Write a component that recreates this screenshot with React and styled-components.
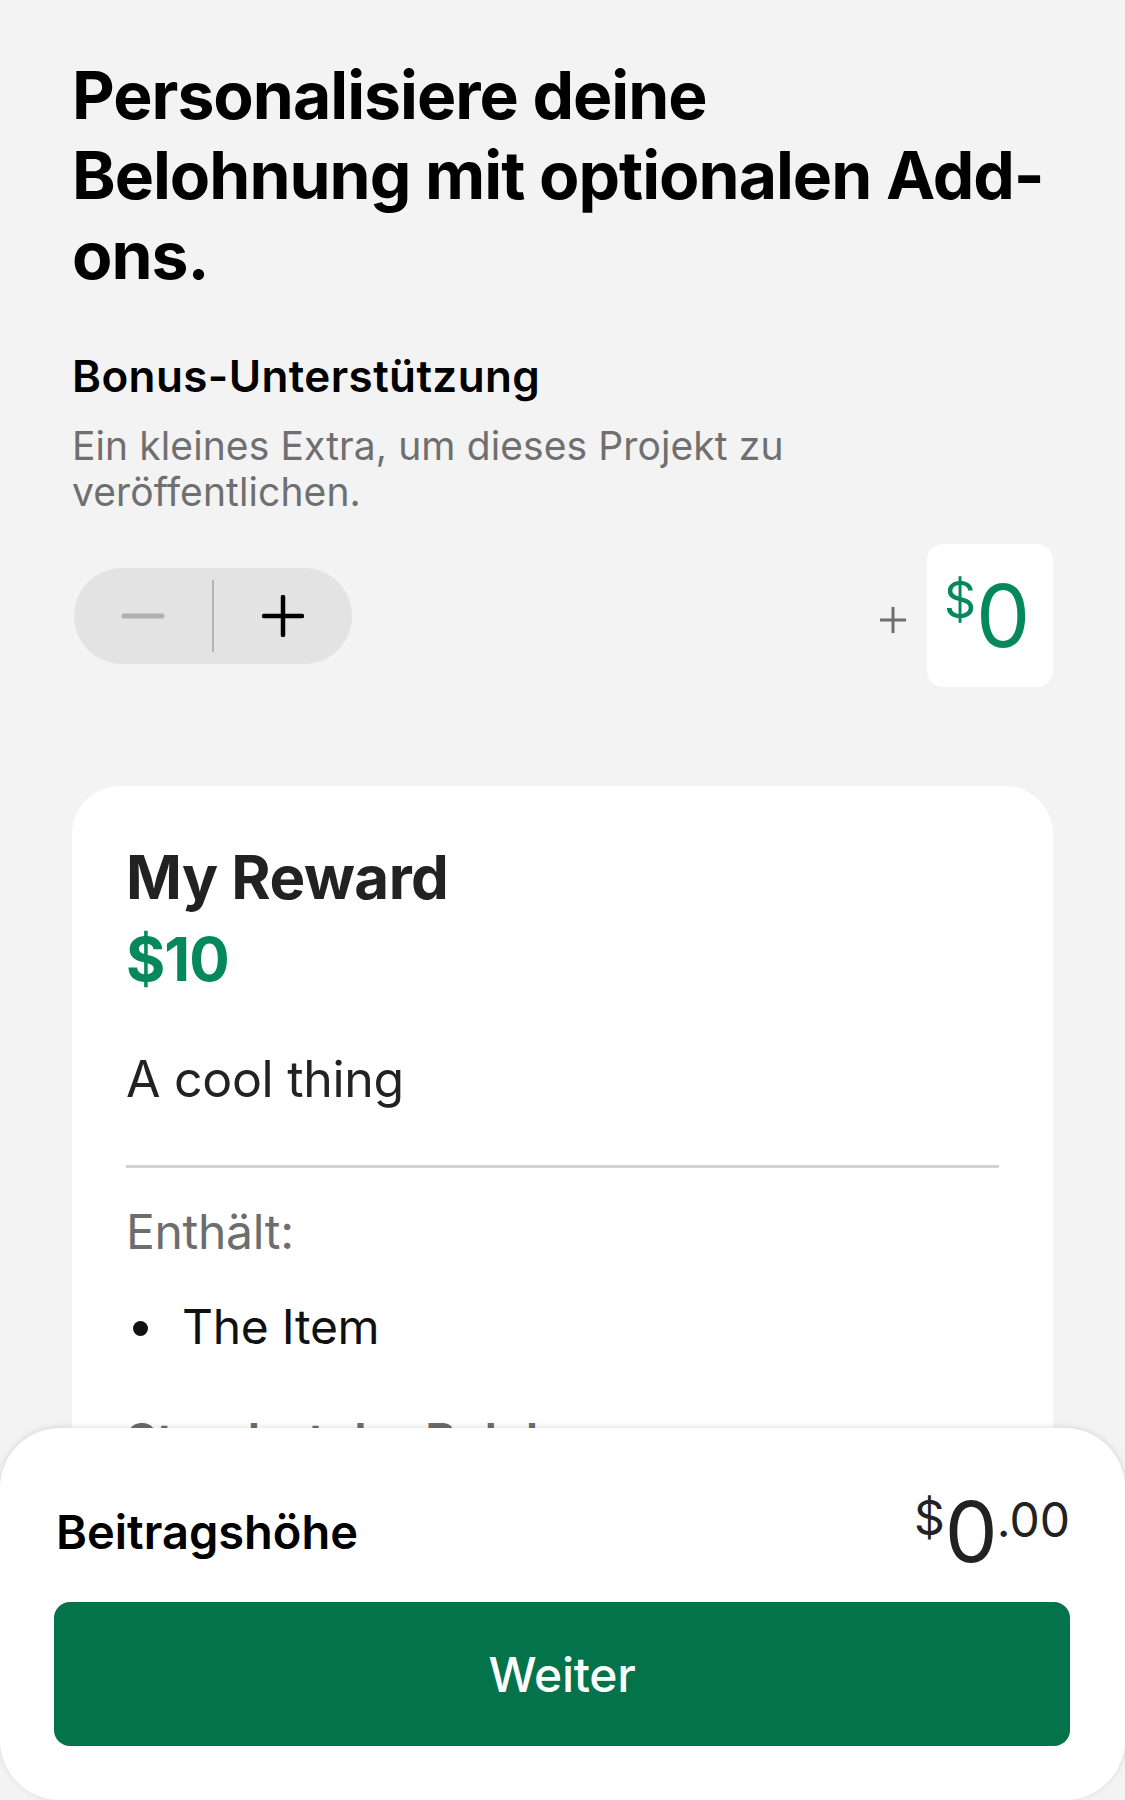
import React from "react";
import styled, { createGlobalStyle } from "styled-components";

const GlobalStyle = createGlobalStyle`
  html, body {
    margin: 0;
    padding: 0;
    background: #f3f3f3;
  }
  body {
    font-family: Inter, "Noto Sans", "Liberation Sans", sans-serif;
    -webkit-font-smoothing: antialiased;
  }
  * { box-sizing: border-box; }
`;

const Screen = styled.div`
  position: relative;
  width: 1125px;
  height: 1800px;
  overflow: hidden;
  background: #f3f3f3;
`;

const Content = styled.main`
  display: flex;
  flex-direction: column;
  padding: 55px 72px 0 72px;
`;

const Title = styled.h1`
  margin: 0 -30px 0 0;
  font-size: 66px;
  line-height: 80px;
  font-weight: 700;
  letter-spacing: -1px;
  color: #000;
  white-space: nowrap;
`;

const SectionTitle = styled.h2`
  margin: 56px 0 0;
  font-size: 44px;
  line-height: 50px;
  font-weight: 600;
  letter-spacing: 0.4px;
  color: #000;
`;

const Description = styled.p`
  margin: 22px 0 0;
  max-width: 760px;
  font-size: 39px;
  line-height: 46px;
  font-weight: 400;
  letter-spacing: 0.1px;
  color: #6f6f6f;
`;

const StepperRow = styled.div`
  display: flex;
  align-items: center;
  justify-content: space-between;
  margin-top: 29px;
  height: 143px;
`;

const Stepper = styled.div`
  display: flex;
  align-items: center;
  width: 278px;
  height: 96px;
  margin-left: 2px;
  border-radius: 48px;
  background: #e3e3e3;
`;

const StepButton = styled.button`
  display: flex;
  align-items: center;
  justify-content: center;
  width: 138px;
  height: 96px;
  padding: 0;
  border: none;
  background: transparent;
  cursor: pointer;
`;

const StepDivider = styled.span`
  width: 2px;
  height: 72px;
  background: #b5b5b5;
`;

const BonusGroup = styled.div`
  display: flex;
  align-items: center;
`;

const PlusSign = styled.span`
  display: flex;
  margin-right: 20px;
  margin-top: 8px;
`;

const BonusBox = styled.div`
  display: flex;
  align-items: center;
  justify-content: flex-start;
  width: 126px;
  height: 143px;
  padding: 0 0 0 17px;
  border-radius: 16px;
  background: #fff;
`;

const Money = styled.span`
  display: inline-flex;
  align-items: flex-start;
  color: ${(p) => p.$color};
`;

const MoneySmall = styled.span`
  font-size: ${(p) => p.$size}px;
  line-height: 1;
  margin-top: ${(p) => p.$offset}px;
  font-weight: 400;
`;

const MoneyBig = styled.span`
  font-size: ${(p) => p.$size}px;
  line-height: 1;
  font-weight: 400;
  letter-spacing: -1px;
`;

const Card = styled.section`
  display: flex;
  flex-direction: column;
  margin-top: 99px;
  padding: 55px 54px 80px;
  border-radius: 48px;
  background: #fff;
`;

const CardTitle = styled.h3`
  margin: 0;
  font-size: 60px;
  line-height: 72px;
  font-weight: 700;
  letter-spacing: -0.5px;
  color: #222;
`;

const CardPrice = styled.div`
  margin-top: 10px;
  font-size: 60px;
  line-height: 72px;
  font-weight: 700;
  letter-spacing: -1px;
  color: #05885b;
`;

const CardText = styled.p`
  margin: 54px 0 0;
  font-size: 50px;
  line-height: 60px;
  font-weight: 400;
  letter-spacing: -0.3px;
  color: #222;
`;

const Rule = styled.hr`
  margin: 56px 0 0;
  border: none;
  height: 3px;
  background: #d2d2d2;
`;

const Label = styled.div`
  margin-top: ${(p) => p.$top}px;
  font-size: 48px;
  line-height: 58px;
  font-weight: ${(p) => (p.$bold ? 600 : 400)};
  letter-spacing: -0.3px;
  color: #6d6d6d;
`;

const ItemList = styled.ul`
  margin: 37px 0 0;
  padding: 0;
  list-style: none;
`;

const Item = styled.li`
  display: flex;
  align-items: center;
  gap: 34px;
  padding-left: 7px;
  font-size: 48px;
  line-height: 58px;
  letter-spacing: -0.3px;
  color: #111;

  &::before {
    content: "";
    width: 15px;
    height: 15px;
    border-radius: 50%;
    background: #111;
    margin-top: 2px;
  }
`;

const Sheet = styled.footer`
  position: absolute;
  left: 0;
  right: 0;
  top: 1428px;
  bottom: 0;
  display: flex;
  flex-direction: column;
  padding: 62px 55px 54px 54px;
  border-radius: 60px;
  background: #fff;
  box-shadow: 0 -1px 6px rgba(0, 0, 0, 0.12);
`;

const TotalRow = styled.div`
  display: flex;
  align-items: center;
  justify-content: space-between;
  height: 84px;
`;

const TotalLabel = styled.span`
  font-size: 47px;
  line-height: 56px;
  font-weight: 600;
  letter-spacing: 0;
  color: #000;
  padding-left: 2px;
`;

const ContinueButton = styled.button`
  margin-top: 28px;
  height: 144px;
  width: 100%;
  border: none;
  border-radius: 16px;
  background: #02734a;
  color: #fff;
  font-family: inherit;
  font-size: 48px;
  font-weight: 500;
  letter-spacing: -0.3px;
  cursor: pointer;
`;

const MinusIcon = () => (
  <svg width="44" height="8" viewBox="0 0 44 8">
    <line x1="3" y1="4" x2="41" y2="4" stroke="#b0b0b0" strokeWidth="5" strokeLinecap="round" />
  </svg>
);

const PlusIcon = () => (
  <svg width="42" height="42" viewBox="0 0 42 42">
    <line x1="2" y1="21" x2="40" y2="21" stroke="#000" strokeWidth="4.5" strokeLinecap="round" />
    <line x1="21" y1="2" x2="21" y2="40" stroke="#000" strokeWidth="4.5" strokeLinecap="round" />
  </svg>
);

const SmallPlusIcon = () => (
  <svg width="28" height="28" viewBox="0 0 28 28">
    <line x1="1" y1="14" x2="27" y2="14" stroke="#6e6e6e" strokeWidth="3" />
    <line x1="14" y1="1" x2="14" y2="27" stroke="#6e6e6e" strokeWidth="3" />
  </svg>
);

export default function App() {
  return (
    <>
      <GlobalStyle />
      <Screen>
        <Content>
          <Title>
            Personalisiere deine
            <br />
            Belohnung mit optionalen Add-
            <br />
            ons.
          </Title>
          <SectionTitle>Bonus-Unterstützung</SectionTitle>
          <Description>Ein kleines Extra, um dieses Projekt zu veröffentlichen.</Description>
          <StepperRow>
            <Stepper>
              <StepButton aria-label="Weniger">
                <MinusIcon />
              </StepButton>
              <StepDivider />
              <StepButton aria-label="Mehr">
                <PlusIcon />
              </StepButton>
            </Stepper>
            <BonusGroup>
              <PlusSign aria-hidden="true">
                <SmallPlusIcon />
              </PlusSign>
              <BonusBox>
                <Money $color="#05885b">
                  <MoneySmall $size={50} $offset={2}>$</MoneySmall>
                  <MoneyBig $size={86}>0</MoneyBig>
                </Money>
              </BonusBox>
            </BonusGroup>
          </StepperRow>
          <Card>
            <CardTitle>My Reward</CardTitle>
            <CardPrice>$10</CardPrice>
            <CardText>A cool thing</CardText>
            <Rule />
            <Label $top={35}>Enthält:</Label>
            <ItemList>
              <Item>The Item</Item>
            </ItemList>
            <Label $top={56} $bold>Standort der Belohnung</Label>
          </Card>
        </Content>
        <Sheet>
          <TotalRow>
            <TotalLabel>Beitragshöhe</TotalLabel>
            <Money $color="#222">
              <MoneySmall $size={48} $offset={4}>$</MoneySmall>
              <MoneyBig $size={84}>0</MoneyBig>
              <MoneySmall $size={48} $offset={6}>.00</MoneySmall>
            </Money>
          </TotalRow>
          <ContinueButton>Weiter</ContinueButton>
        </Sheet>
      </Screen>
    </>
  );
}
